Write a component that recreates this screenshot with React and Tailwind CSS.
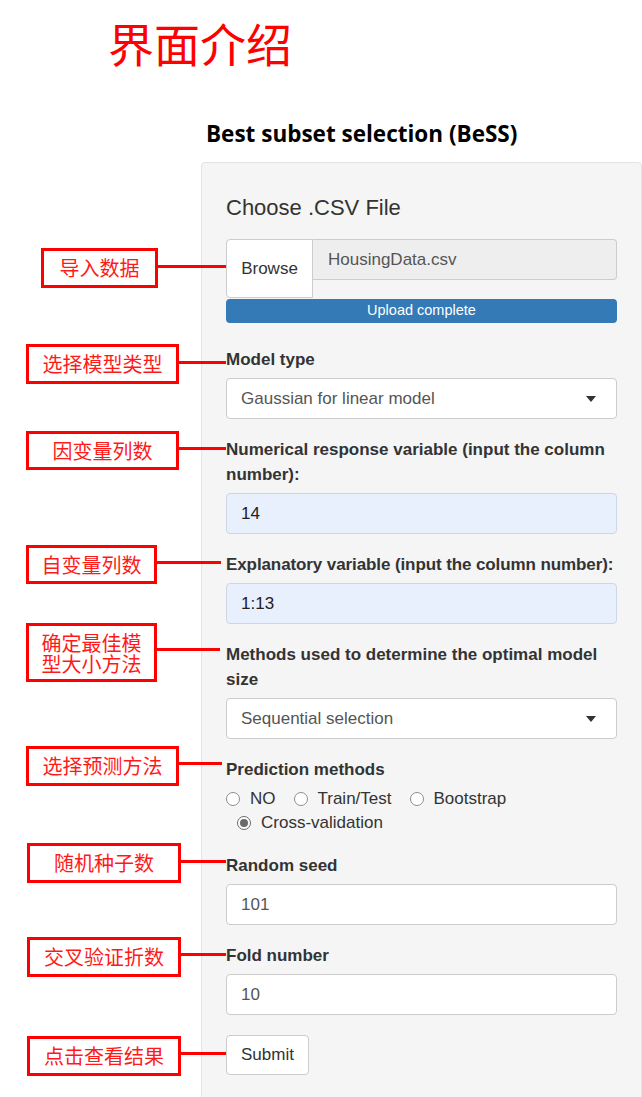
import React from 'react';

const sans = "font-['Liberation_Sans',Arial,sans-serif]";
const cjk = "font-['Noto_Sans_CJK_SC',sans-serif]";

const Callout = ({ box, line, children }) => (
    <>
        <div className={`absolute ${box} border-[3px] border-[#ff0000] bg-white flex flex-col items-center justify-center text-[20px] leading-[22px] text-[#ff1a1a] ${cjk}`}>
            {children}
        </div>
        <div className={`absolute ${line} h-[3px] bg-[#ff0000]`}></div>
    </>
);

const Label = ({ children, nowrap }) => (
    <label className={`block mb-[6px] text-[17px] leading-[25px] font-bold text-[#333] ${nowrap ? 'whitespace-nowrap tracking-[-0.1px]' : ''}`}>{children}</label>
);

const Select = ({ value }) => (
    <div className="h-[41px] flex items-center justify-between bg-white border border-[#ccc] rounded-[4px] pl-[14px] pr-[20px] text-[17px] text-[#555]">
        <span>{value}</span>
        <span className="w-0 h-0 border-t-[6px] border-t-[#333] border-x-[5.5px] border-x-transparent"></span>
    </div>
);

const TextInput = ({ value, filled }) => (
    <div className={`h-[41px] flex items-center border rounded-[4px] pl-[14px] text-[17px] ${filled ? 'bg-[#e8f0fe] border-[#cfd6e3] text-[#202124]' : 'bg-white border-[#ccc] text-[#555]'}`}>
        {value}
    </div>
);

const Radio = ({ label, checked }) => (
    <div className="flex items-center gap-[10px]">
        <span className={`w-[14px] h-[14px] rounded-full bg-white border flex items-center justify-center ${checked ? 'border-[#6b6b6b]' : 'border-[#8f8f8f]'}`}>
            {checked && <span className="w-[8px] h-[8px] rounded-full bg-[#6b6b6b]"></span>}
        </span>
        <span>{label}</span>
    </div>
);

const App = () => {
    return (
        <div className={`relative w-[642px] h-[1097px] overflow-hidden bg-white ${sans}`}>
            <div className={`h-[112px] pl-[108px] pt-[16px] text-[46px] leading-[52px] text-[#ff0000] ${cjk}`}>界面介绍</div>
            <h1 className="h-[50px] pl-[206px] text-[22.5px] leading-[44px] font-bold text-black font-['Open_Sans',sans-serif]">
                Best subset selection (BeSS)
            </h1>

            <div className="ml-[201px] w-[441px] h-[960px] bg-[#f5f5f5] border border-[#e3e3e3] rounded-t-[4px] px-[24px] pt-[30px] text-[#333]">
                <div className="text-[22px] leading-[30px] text-[#333]">Choose .CSV File</div>

                <div className="mt-[16px] flex items-start">
                    <div className="w-[87px] h-[59px] flex items-center justify-center bg-white border border-[#ccc] rounded-l-[4px] text-[17px] text-[#333]">
                        Browse
                    </div>
                    <div className="flex-1 h-[41px] flex items-center bg-[#eee] border border-l-0 border-[#ccc] rounded-r-[4px] pl-[15px] text-[17px] text-[#555]">
                        HousingData.csv
                    </div>
                </div>
                <div className="mt-[1px] h-[24px] rounded-[4px] bg-[#337ab7] flex items-center justify-center text-white text-[14.5px]">
                    Upload complete
                </div>

                <div className="mt-[24px] mb-[18px]">
                    <Label>Model type</Label>
                    <Select value="Gaussian for linear model" />
                </div>

                <div className="mb-[18px]">
                    <Label>Numerical response variable (input the column number):</Label>
                    <TextInput value="14" filled />
                </div>

                <div className="mb-[18px]">
                    <Label nowrap>Explanatory variable (input the column number):</Label>
                    <TextInput value="1:13" filled />
                </div>

                <div className="mb-[18px]">
                    <Label>Methods used to determine the optimal model size</Label>
                    <Select value="Sequential selection" />
                </div>

                <div className="mb-[18px]">
                    <label className="block mb-[5px] text-[17px] leading-[25px] font-bold text-[#333]">Prediction methods</label>
                    <div className="text-[17px] leading-[24px] text-[#333]">
                        <div className="flex items-center gap-[18px]">
                            <Radio label="NO" />
                            <Radio label="Train/Test" />
                            <Radio label="Bootstrap" />
                        </div>
                        <div className="flex items-center pl-[11px]">
                            <Radio label="Cross-validation" checked />
                        </div>
                    </div>
                </div>

                <div className="mb-[18px]">
                    <Label>Random seed</Label>
                    <TextInput value="101" />
                </div>

                <div className="mb-[20px]">
                    <Label>Fold number</Label>
                    <TextInput value="10" />
                </div>

                <button className="w-[83px] h-[40px] bg-white border border-[#ccc] rounded-[4px] text-[17px] text-[#333]">
                    Submit
                </button>
            </div>

            <Callout box="left-[41px] top-[248px] w-[117px] h-[40px]" line="left-[158px] top-[265px] w-[68px]">导入数据</Callout>
            <Callout box="left-[26px] top-[344px] w-[153px] h-[40px]" line="left-[179px] top-[361px] w-[47px]">选择模型类型</Callout>
            <Callout box="left-[26px] top-[431px] w-[153px] h-[39px]" line="left-[179px] top-[447px] w-[47px]">因变量列数</Callout>
            <Callout box="left-[26px] top-[545px] w-[131px] h-[39px]" line="left-[157px] top-[561px] w-[64px]">自变量列数</Callout>
            <Callout box="left-[26px] top-[623px] w-[131px] h-[59px]" line="left-[157px] top-[648px] w-[63px]">
                <span className="block h-[21px] leading-[21px]">确定最佳模</span>
                <span className="block h-[21px] leading-[21px]">型大小方法</span>
            </Callout>
            <Callout box="left-[26px] top-[746px] w-[153px] h-[40px]" line="left-[179px] top-[762px] w-[43px]">选择预测方法</Callout>
            <Callout box="left-[27px] top-[843px] w-[154px] h-[40px]" line="left-[181px] top-[860px] w-[45px]">随机种子数</Callout>
            <Callout box="left-[27px] top-[937px] w-[154px] h-[40px]" line="left-[181px] top-[953px] w-[45px]">交叉验证折数</Callout>
            <Callout box="left-[27px] top-[1036px] w-[154px] h-[40px]" line="left-[181px] top-[1052px] w-[45px]">点击查看结果</Callout>
        </div>
    );
};

export default App;
